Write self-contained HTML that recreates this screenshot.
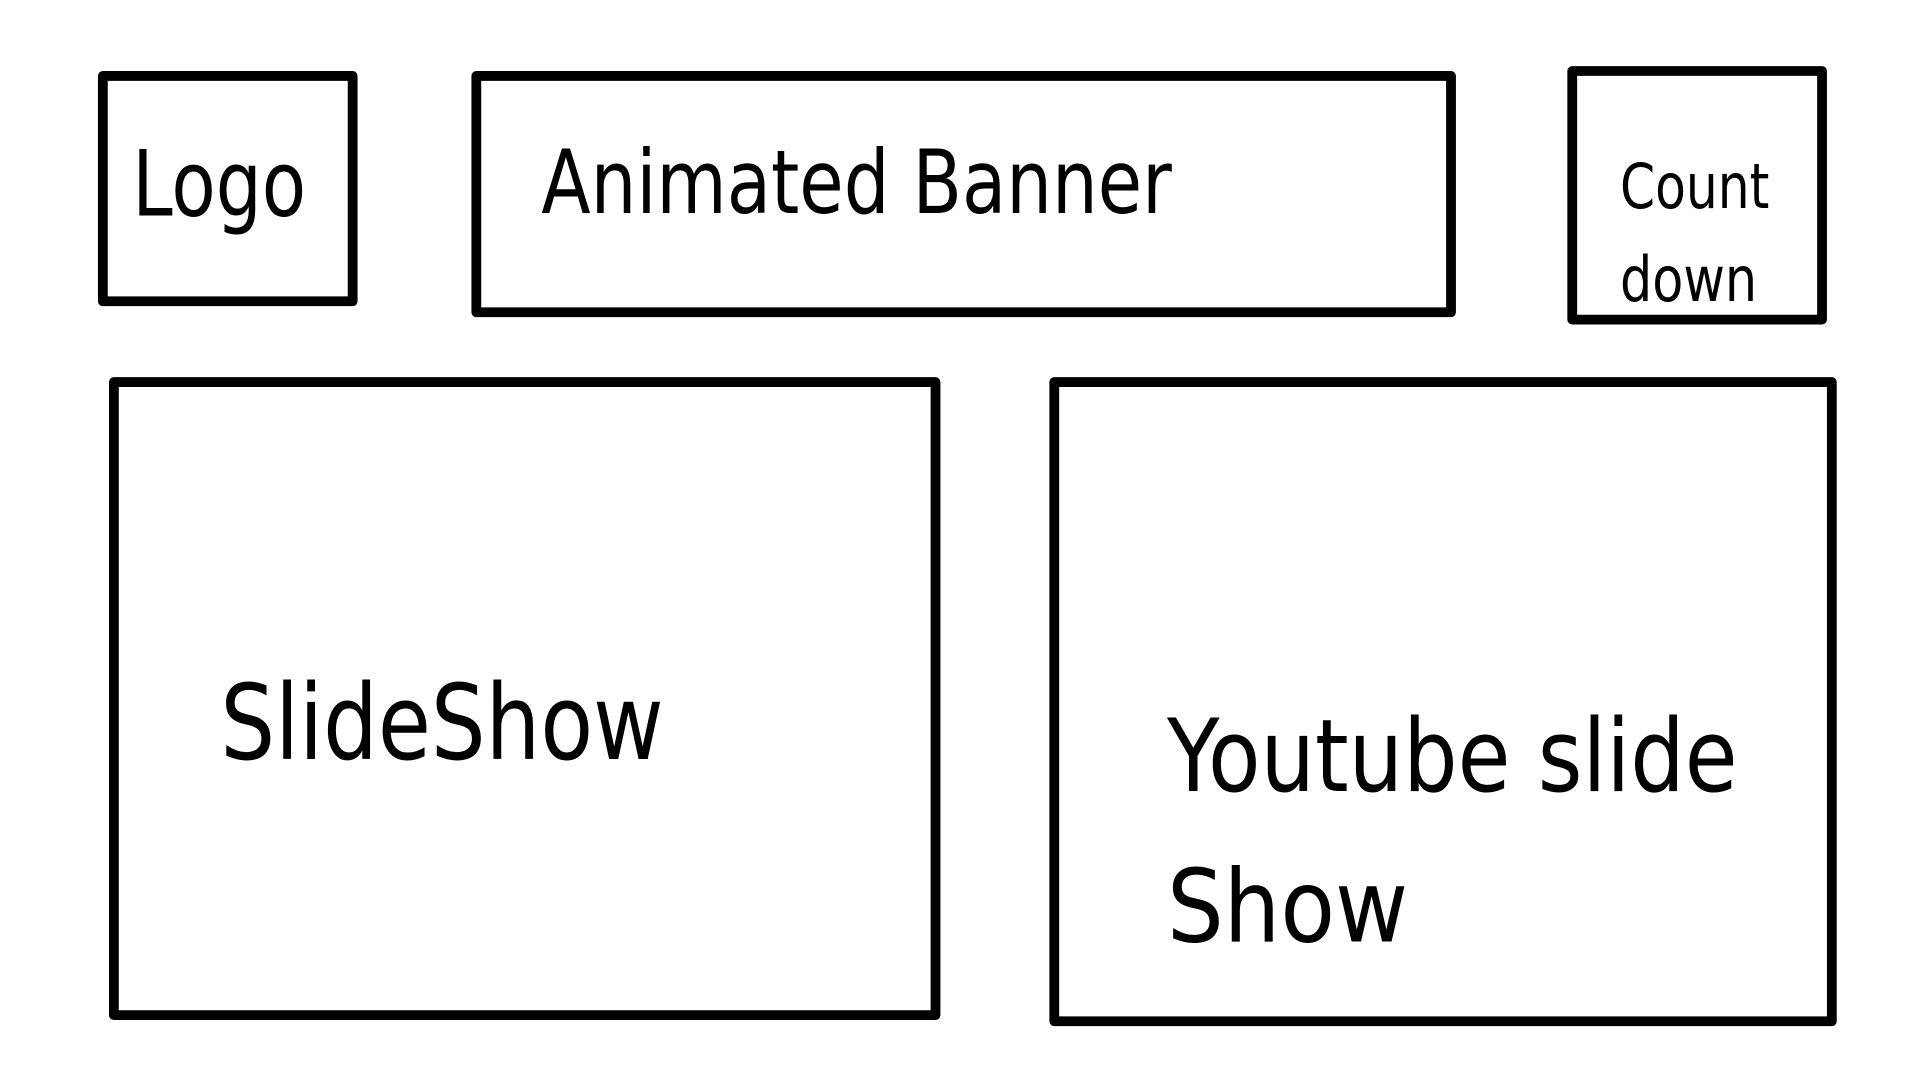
<!DOCTYPE html>
<html><head><meta charset="utf-8"><style>html,body{margin:0;padding:0;background:#fff;overflow:hidden}svg{display:block}</style></head>
<body>
<svg width="1920" height="1080" viewBox="0 0 1568 882" xmlns="http://www.w3.org/2000/svg">
<g fill="none" stroke="#000" stroke-width="8" stroke-linejoin="round">
<rect x="84" y="62" width="204" height="184"/>
<rect x="389" y="62" width="796" height="193"/>
<rect x="1284" y="58" width="204" height="203"/>
<rect x="93" y="312" width="671" height="517"/>
<rect x="861" y="312" width="635" height="522"/>
</g>
<g font-family="DejaVu Sans, sans-serif" fill="#000">
<text x="108" y="176" font-size="74" textLength="142" lengthAdjust="spacingAndGlyphs">Logo</text>
<text x="442" y="174" font-size="72" textLength="515" lengthAdjust="spacingAndGlyphs">Animated Banner</text>
<text x="1323" y="170" font-size="51" textLength="122" lengthAdjust="spacingAndGlyphs">Count</text>
<text x="1323" y="246" font-size="51" textLength="112" lengthAdjust="spacingAndGlyphs">down</text>
<text x="180" y="620" font-size="85" textLength="362" lengthAdjust="spacingAndGlyphs">SlideShow</text>
<text x="953" y="646" font-size="82" textLength="466" lengthAdjust="spacingAndGlyphs">Youtube slide</text>
<text x="953" y="769" font-size="82" textLength="197" lengthAdjust="spacingAndGlyphs">Show</text>
</g>
</svg>
</body></html>
